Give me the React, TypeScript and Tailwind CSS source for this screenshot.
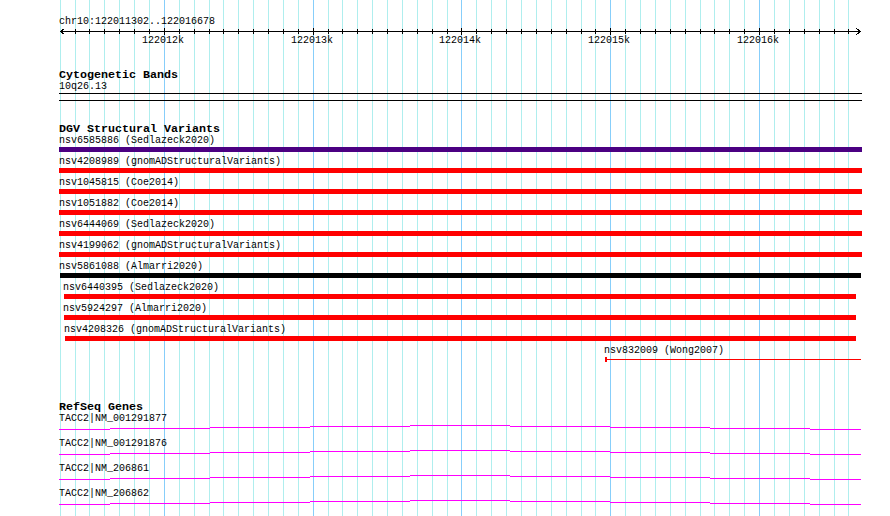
import React from "react";

const START = 122011302;
const END = 122016678;
const X0 = 60;
const W = 800;
const px = (p: number) => Math.round(X0 + ((p - START) * W) / (END - START));

const gridPos = Array.from({ length: 54 }, (_, k) => 122011300 + 100 * k);
const majors = [122012000, 122013000, 122014000, 122015000, 122016000];

type Variant = {
  label: string;
  labelCls: string;
  barCls: string;
};

const variants: Variant[] = [
  { label: "nsv6585886 (Sedlazeck2020)", labelCls: "ml-[59px]", barCls: "ml-[59px] w-[803px] bg-[#4b0082]" },
  { label: "nsv4208989 (gnomADStructuralVariants)", labelCls: "ml-[59px]", barCls: "ml-[59px] w-[803px] bg-[#ff0000]" },
  { label: "nsv1045815 (Coe2014)", labelCls: "ml-[59px]", barCls: "ml-[59px] w-[803px] bg-[#ff0000]" },
  { label: "nsv1051882 (Coe2014)", labelCls: "ml-[59px]", barCls: "ml-[59px] w-[803px] bg-[#ff0000]" },
  { label: "nsv6444069 (Sedlazeck2020)", labelCls: "ml-[59px]", barCls: "ml-[59px] w-[803px] bg-[#ff0000]" },
  { label: "nsv4199062 (gnomADStructuralVariants)", labelCls: "ml-[59px]", barCls: "ml-[59px] w-[803px] bg-[#ff0000]" },
  { label: "nsv5861088 (Almarri2020)", labelCls: "ml-[59px]", barCls: "ml-[60px] w-[801px] bg-black" },
  { label: "nsv6440395 (Sedlazeck2020)", labelCls: "ml-[63px]", barCls: "ml-[64px] w-[792px] bg-[#ff0000]" },
  { label: "nsv5924297 (Almarri2020)", labelCls: "ml-[63px]", barCls: "ml-[64px] w-[792px] bg-[#ff0000]" },
  { label: "nsv4208326 (gnomADStructuralVariants)", labelCls: "ml-[64px]", barCls: "ml-[65px] w-[791px] bg-[#ff0000]" },
];

const genes = ["TACC2|NM_001291877", "TACC2|NM_001291876", "TACC2|NM_206861", "TACC2|NM_206862"];

const hatSegs: [number, number, number][] = [
  [59, 110, 5],
  [110, 210, 4],
  [210, 310, 3],
  [310, 410, 2],
  [410, 510, 1],
  [510, 610, 2],
  [610, 710, 3],
  [710, 810, 4],
  [810, 861, 5],
];

function Grid() {
  return (
    <svg className="absolute inset-0" width={890} height={516} shapeRendering="crispEdges">
      {gridPos.map((p) => {
        const major = p % 1000 === 0;
        return <rect key={p} x={px(p)} y={0} width={1} height={516} fill={major ? "#87cefa" : "#afeeee"} />;
      })}
    </svg>
  );
}

function Ruler() {
  return (
    <svg width={890} height={9} shapeRendering="crispEdges" className="block">
      <rect x={60} y={4} width={801} height={1} fill="#000" />
      {gridPos.slice(1).map((p) => {
        const major = p % 1000 === 0;
        return <rect key={p} x={px(p)} y={major ? 1 : 2} width={1} height={major ? 7 : 5} fill="#000" />;
      })}
      <polyline points="64.5,1.5 60.5,4.5 64.5,7.5" fill="none" stroke="#000" strokeWidth={1} />
      <polyline points="856.5,1.5 860.5,4.5 856.5,7.5" fill="none" stroke="#000" strokeWidth={1} />
    </svg>
  );
}

function Hat() {
  return (
    <svg width={890} height={15} shapeRendering="crispEdges" className="block">
      {hatSegs.map(([a, b, y]) => (
        <rect key={a} x={a} y={y} width={b - a} height={1} fill="#ff00ff" />
      ))}
    </svg>
  );
}

export default function App() {
  return (
    <div className="relative h-[516px] w-[890px] overflow-hidden bg-white font-['Liberation_Mono',monospace] text-[10px] leading-[10px] text-black">
      <Grid />
      <div className="relative flex flex-col pt-[17px]">
        <div className="ml-[59px] h-[10px] whitespace-pre">chr10:122011302..122016678</div>
        <Ruler />
        <div className="relative h-[10px]">
          {majors.map((m) => (
            <span key={m} className="absolute top-0 whitespace-pre" style={{ left: px(m) - 22 }}>
              {`${Math.round(m / 1000)}k`}
            </span>
          ))}
        </div>

        <div className="ml-[59px] mt-[23px] h-[12px] text-[11.667px] font-bold leading-[12px]">Cytogenetic Bands</div>
        <div className="ml-[59px] mt-[1px] h-[10px]">10q26.13</div>
        <div className="ml-[59px] mt-[1px] h-[8px] w-[803px] border-y border-black" />

        <div className="ml-[59px] mt-[22px] h-[12px] text-[11.667px] font-bold leading-[12px] whitespace-pre">DGV Structural Variants</div>
        <div className="mt-[1px] flex flex-col">
          {variants.map((v) => (
            <div key={v.label} className="flex h-[21px] flex-col">
              <div className={`${v.labelCls} h-[10px] whitespace-pre`}>{v.label}</div>
              <div className={`${v.barCls} mt-[1px] h-[5px]`} />
            </div>
          ))}
          <div className="flex h-[21px] flex-col">
            <div className="ml-[604px] h-[10px] whitespace-pre">nsv832009 (Wong2007)</div>
            <div className="ml-[605px] mt-[1px] flex h-[5px] items-center">
              <div className="h-[5px] w-[2px] bg-[#ff0000]" />
              <div className="h-[1px] w-[254px] bg-[#ff0000]" />
            </div>
          </div>
        </div>

        <div className="ml-[59px] mt-[34px] h-[12px] text-[11.667px] font-bold leading-[12px] whitespace-pre">RefSeq Genes</div>
        <div className="mt-[1px] flex flex-col">
          {genes.map((g) => (
            <div key={g} className="flex h-[25px] flex-col">
              <div className="ml-[59px] h-[10px] whitespace-pre">{g}</div>
              <Hat />
            </div>
          ))}
        </div>
      </div>
    </div>
  );
}
